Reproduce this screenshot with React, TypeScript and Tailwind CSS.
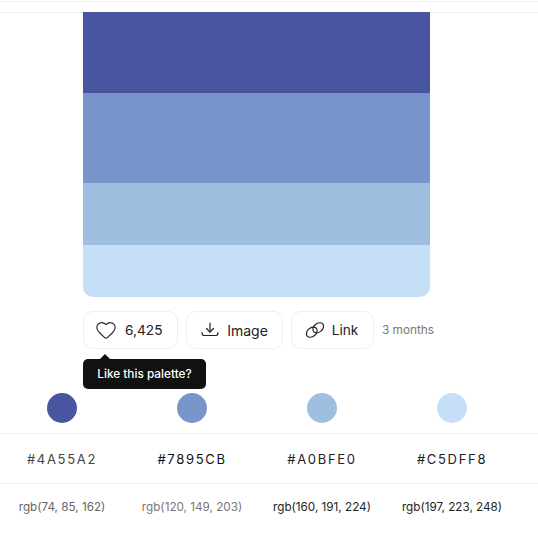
import { Heart } from "lucide-react"

const colors = [
  { hex: "#4A55A2", rgb: "rgb(74, 85, 162)", dot: "bg-[#4a55a2]", hexText: "text-[#444]", rgbText: "text-[#666]" },
  { hex: "#7895CB", rgb: "rgb(120, 149, 203)", dot: "bg-[#7895cb]", hexText: "text-[#111]", rgbText: "text-[#777]" },
  { hex: "#A0BFE0", rgb: "rgb(160, 191, 224)", dot: "bg-[#a0bfe0]", hexText: "text-[#222]", rgbText: "text-[#222]" },
  { hex: "#C5DFF8", rgb: "rgb(197, 223, 248)", dot: "bg-[#c5dff8]", hexText: "text-[#222]", rgbText: "text-[#222]" },
]

const DownloadIcon = () => (
  <svg width="18" height="16" viewBox="0 0 18 16" fill="none" stroke="currentColor" strokeWidth="1.2" strokeLinecap="round" strokeLinejoin="round">
    <path d="M9 1v9" />
    <path d="M5.500 6.500L9 10l3.500-3.500" />
    <path d="M1 10.500c0 2 .8 3 2 3h12c1.200 0 2-1 2-3" />
  </svg>
)

const LinkIcon = () => (
  <svg width="20" height="20" viewBox="0 0 20 20" fill="none" stroke="currentColor" strokeWidth="1.2">
    <ellipse cx="6.800" cy="12.200" rx="6" ry="4.300" transform="rotate(-40 6.800 12.200)" />
    <ellipse cx="13.200" cy="7.800" rx="6" ry="4.300" transform="rotate(-40 13.200 7.800)" />
  </svg>
)

export default function App() {
  return (
    <div className="h-[559px] w-[538px] overflow-hidden bg-white font-['Inter',sans-serif]">
      <div className="mt-px h-[12px] border-y border-[#eeeeee]" />

      <div className="ml-[83px] w-[347px] -mt-px overflow-hidden rounded-b-[10px]">
        <div className="h-[81px] bg-[#4a55a2]" />
        <div className="h-[90px] bg-[#7895cb]" />
        <div className="h-[62px] bg-[#a0bfe0]" />
        <div className="h-[52px] bg-[#c5dff8]" />
      </div>

      <div className="relative ml-[83px] mt-[14px] flex items-center text-[14px] text-[#222]">
        <button className="flex h-[38px] w-[95px] items-center gap-[8px] rounded-[10px] border border-[#eeeeee] pl-[11px]">
          <Heart size={22} strokeWidth={1.2} />
          <span className="pt-px text-[13.7px]">6,425</span>
        </button>
        <button className="ml-[8px] flex h-[38px] w-[97px] items-center justify-center gap-[8px] rounded-[10px] border border-[#eeeeee]">
          <DownloadIcon />
          <span className="pt-px">Image</span>
        </button>
        <button className="ml-[8px] flex h-[38px] w-[83px] items-center justify-center gap-[7px] rounded-[10px] border border-[#eeeeee] pr-[2px]">
          <LinkIcon />
          <span className="pt-px text-[13.7px]">Link</span>
        </button>
        <span className="ml-[8px] pt-[2px] text-[11.8px] text-[#777]">3 months</span>

        <div className="absolute left-0 top-[48px] z-10 flex h-[30px] w-[123px] items-center justify-center rounded-[5px] bg-[#111111] pt-px text-[11.8px] font-medium text-white">
          Like this palette?
          <div className="absolute left-[16px] top-[-5px] h-0 w-0 border-x-[6px] border-b-[6px] border-x-transparent border-b-[#111111]" />
        </div>
      </div>

      <div className="-ml-[3px] mt-[44px] grid w-[520px] grid-cols-4 justify-items-center">
        {colors.map((c) => (
          <div key={c.hex} className={`h-[30px] w-[30px] rounded-full ${c.dot}`} />
        ))}
      </div>

      <div className="mt-[10px] border-t border-[#eeeeee]">
        <div className="-ml-[3px] grid h-[49px] w-[520px] grid-cols-4 items-center pt-[2px] text-center text-[13px] tracking-[0.13em]">
          {colors.map((c) => (
            <div key={c.hex} className={c.hexText}>{c.hex}</div>
          ))}
        </div>
      </div>

      <div className="border-t border-[#eeeeee]">
        <div className="-ml-[3px] grid h-[47px] w-[520px] grid-cols-4 items-center text-center text-[11.7px]">
          {colors.map((c) => (
            <div key={c.rgb} className={c.rgbText}>{c.rgb}</div>
          ))}
        </div>
      </div>
    </div>
  )
}
